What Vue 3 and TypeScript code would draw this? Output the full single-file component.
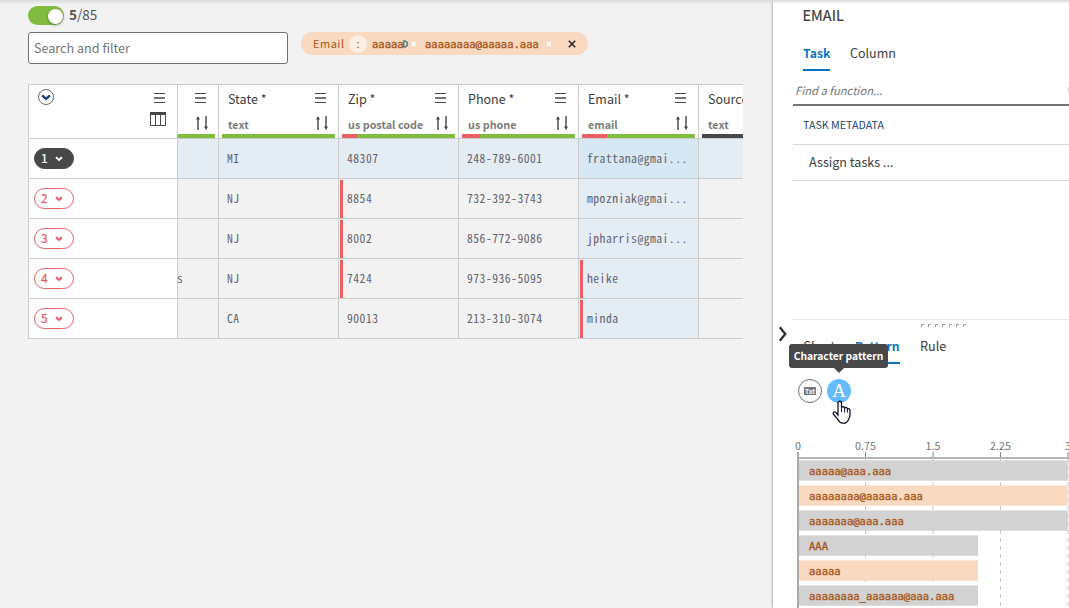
<script setup lang="ts">
interface Column {
  name: string
  type: string
  bad: number
  kind: 'normal' | 'clipped' | 'empty'
}
interface Cell {
  text: string
  invalid?: boolean
}

const columns: Column[] = [
  { name: '', type: '', bad: 0, kind: 'clipped' },
  { name: 'State *', type: 'text', bad: 0, kind: 'normal' },
  { name: 'Zip *', type: 'us postal code', bad: 15, kind: 'normal' },
  { name: 'Phone *', type: 'us phone', bad: 18, kind: 'normal' },
  { name: 'Email *', type: 'email', bad: 25, kind: 'normal' },
  { name: 'Source', type: 'text', bad: 0, kind: 'empty' },
]

const rows: Cell[][] = [
  [{ text: '' }, { text: 'MI' }, { text: '48307' }, { text: '248-789-6001' }, { text: 'frattana@gmai...' }, { text: '' }],
  [{ text: '' }, { text: 'NJ' }, { text: '8854', invalid: true }, { text: '732-392-3743' }, { text: 'mpozniak@gmai...' }, { text: '' }],
  [{ text: '' }, { text: 'NJ' }, { text: '8002', invalid: true }, { text: '856-772-9086' }, { text: 'jpharris@gmai...' }, { text: '' }],
  [{ text: 's' }, { text: 'NJ' }, { text: '7424', invalid: true }, { text: '973-936-5095' }, { text: 'heike', invalid: true }, { text: '' }],
  [{ text: '' }, { text: 'CA' }, { text: '90013' }, { text: '213-310-3074' }, { text: 'minda', invalid: true }, { text: '' }],
]

const ticks = [
  { label: '0', x: 8 },
  { label: '0.75', x: 75.5 },
  { label: '1.5', x: 143 },
  { label: '2.25', x: 210.5 },
  { label: '3', x: 278 },
]
const bars = [
  { label: 'aaaaa@aaa.aaa', value: 3, selected: false },
  { label: 'aaaaaaaa@aaaaa.aaa', value: 3, selected: true },
  { label: 'aaaaaaa@aaa.aaa', value: 3, selected: false },
  { label: 'AAA', value: 2, selected: false },
  { label: 'aaaaa', value: 2, selected: true },
  { label: 'aaaaaaaa_aaaaaa@aaa.aaa', value: 2, selected: false },
]
</script>

<template>
  <div class="app">
    <main class="main">
      <div class="counter">
        <span class="toggle"><span class="knob"></span></span>
        <span class="count"><b>5</b>/85</span>
      </div>
      <div class="filters">
        <div class="search">Search and filter</div>
        <div class="chip">
          <span class="chip-name">Email</span>
          <span class="chip-op">:</span>
          <span class="pattern-text chip-a">aaaaa</span>
          <svg class="chip-icons" width="18" height="10" viewBox="0 0 18 10">
            <path d="M1.700 2v6h1.600l2-1.700v-2.600l-2-1.700z" fill="none" stroke="#4f8589" stroke-width="1.600" />
            <path d="M9.500 2.800l4 4.400m0-4.400l-4 4.400" stroke="#fff" stroke-width="1.500" />
          </svg>
          <span class="pattern-text chip-b">aaaaaaaa@aaaaa.aaa</span>
          <svg class="chip-x" width="6" height="10" viewBox="0 0 6 10"><path d="M.8 2.800l4.200 4.400m0-4.400L.8 7.200" stroke="#fff" stroke-width="1.500" /></svg>
          <svg class="chip-close" width="8" height="8" viewBox="0 0 8 8"><path d="M.8.8l6.400 6.400m0-6.400L.8 7.200" stroke="#222" stroke-width="1.500" /></svg>
        </div>
      </div>

      <div class="grid">
        <div class="row head">
          <div class="cell corner">
            <svg width="17" height="17" viewBox="0 0 17 17" class="circle-down">
              <circle cx="8" cy="8" r="7.500" fill="#fff" stroke="#666" />
              <path d="M4.100 6.400l3.900 3.400 3.900-3.400" fill="none" stroke="#1b4670" stroke-width="2.400" />
            </svg>
            <div class="corner-icons">
              <svg class="corner-burger" width="11" height="11" viewBox="0 0 11 11"><path d="M0 .5h11M0 9.500h11" stroke="#484848" /><path d="M0 5h11" stroke="#777" stroke-width="2" /></svg>
              <svg width="16" height="14" viewBox="0 0 16 14"><path d="M.5 1v12.500h15V1M5.500 3v10.500M10.500 3v10.500" fill="none" stroke="#484848" /><path d="M0 0h16v3H0z" fill="#484848" /></svg>
            </div>
          </div>
          <div v-for="(c, i) in columns" :key="i" class="cell th" :class="c.kind">
            <div class="th-line top">
              <span class="name">{{ c.name }}</span>
              <svg v-if="c.kind !== 'empty'" class="burger" width="11" height="11" viewBox="0 0 11 11"><path d="M0 .5h11M0 9.500h11" stroke="#484848" /><path d="M0 5h11" stroke="#777" stroke-width="2" /></svg>
            </div>
            <div class="th-line">
              <span class="type">{{ c.type }}</span>
              <svg v-if="c.kind !== 'empty'" class="sort" width="13" height="14" viewBox="0 0 13 14">
                <path d="M2 2v12M10 0v12" stroke="#5c5c5c" stroke-width="1.600" />
                <path d="M0 3.500L2 0l2 3.500zM8 10.500l2 3.500 2-3.500z" fill="#444" />
              </svg>
            </div>
            <div class="quality"><span class="bad" :style="{ width: c.bad + 'px' }"></span></div>
          </div>
        </div>
        <div v-for="(r, ri) in rows" :key="ri" class="row" :class="{ active: ri === 0 }">
          <div class="cell index">
            <span class="pill"><span class="num">{{ ri + 1 }}</span>
              <svg width="8" height="6" viewBox="0 0 8 6"><path d="M1 1.200l3 2.800 3-2.800" fill="none" stroke="currentColor" stroke-width="1.900" /></svg>
            </span>
          </div>
          <div v-for="(c, ci) in r" :key="ci" class="cell td mono" :class="{ invalid: c.invalid, email: ci === 4, first: ci === 0 }">{{ c.text }}</div>
        </div>
      </div>
    </main>

    <aside class="panel">
      <h1>EMAIL</h1>
      <nav class="tabs"><span class="tab on">Task</span><span class="tab">Column</span></nav>
      <div class="find"><span>Find a function...</span>
        <svg width="1" height="6" viewBox="0 0 1 6"><path d="M.5 0v6" stroke="#d4d4d4" /></svg>
      </div>
      <div class="section">TASK METADATA</div>
      <div class="item">Assign tasks ...</div>
      <div class="lower">
        <svg class="grip" width="46" height="4" viewBox="0 0 46 4"><path v-for="n in 7" :key="n" :d="`M${(n - 1) * 7 + 0.5} 3V.5h2.500`" fill="none" stroke="#999" /></svg>
        <nav class="tabs low"><span class="tab chart">Chart</span><span class="tab on pattern">Pattern</span><span class="tab rule">Rule</span></nav>
        <div class="modes">
          <span class="mode"><span class="txt">Txt</span></span>
          <span class="mode on">A</span>
        </div>
        <svg class="chart-svg" width="279" height="170" viewBox="0 0 279 170">
          <g class="ticks">
            <text v-for="t in ticks" :key="t.label" :x="t.x" y="12" text-anchor="middle">{{ t.label }}</text>
          </g>
          <path v-for="t in ticks" :key="'g' + t.x" :d="`M${t.x} 20V170`" stroke="#c8c8c8" stroke-dasharray="4 4" />
          <path v-for="t in ticks" :key="'t' + t.x" :d="`M${t.x} 14V21`" stroke="#888" />
          <path d="M7.500 20H279" stroke="#b4b4b4" stroke-width="2" />
          <g v-for="(b, i) in bars" :key="b.label">
            <rect x="8.500" :y="22.400 + i * 25" :width="b.value * 90 - 0.5" height="20.300" :fill="b.selected ? '#f9d9bf' : '#d2d2d2'" />
            <text class="pattern-text bar-label" x="19" :y="37 + i * 25">{{ b.label }}</text>
          </g>
          <path d="M8 14V170" stroke="#aaa" stroke-width="2" />
        </svg>
      </div>
    </aside>

    <svg class="collapse" width="10" height="16" viewBox="0 0 10 16"><path d="M1.800 1.200L7.300 8l-5.500 6.800" fill="none" stroke="#2c2c2c" stroke-width="2.300" /></svg>
    <div class="tooltip">Character pattern</div>
    <svg class="cursor" width="19" height="25" viewBox="0 0 19 25">
      <path d="M6 15V3.200C6 .6 9.500.6 9.500 3.200V7.500C10 6.300 12.400 6.500 12.600 8.100 13.300 7 15.200 7.300 15.400 8.900 16.300 8.200 18 8.800 18 10.500V15C18 17.500 17 18.500 16.200 20.200 15 22.600 12.500 23.600 10.500 23.200 7.500 22.800 6.500 20.500 5.500 18.800L1.500 14.300C.5 12.600 2.600 11.200 3.900 12.500z" fill="#fff" stroke="#14142a" stroke-width="1.300" />
      <path d="M9.500 7v5M12.600 8v4.500M15.400 9v3.600" stroke="#14142a" />
    </svg>
    <div class="top-shade"></div>
  </div>
</template>

<style>
body { margin: 0; overflow: hidden; }
</style>

<style scoped>
.app { position: relative; display: flex; width: 1069px; height: 608px; overflow: hidden; background: #f2f2f2; color: #3d3d3d; font: 12.500px/20px "Noto Sans CJK SC", "Open Sans", sans-serif; }
.app * { box-sizing: border-box; }
.app svg { display: block; flex: none; }
.mono { font-family: "Noto Sans Mono CJK SC", "Liberation Mono", monospace; font-size: 11.600px; letter-spacing: .5px; white-space: pre; }
.pattern-text { font-family: "DejaVu Sans Mono", monospace; font-size: 10.500px; white-space: pre; }
.top-shade { position: absolute; left: 0; top: 0; width: 100%; height: 4px; background: linear-gradient(#d9d9d9, rgba(230, 230, 230, 0)); }

.main { width: 773px; padding: 5px 0 0 28px; }
.counter { display: flex; align-items: center; height: 20px; gap: 5px; }
.toggle { width: 36px; height: 19px; border-radius: 10px; background: #81bc41; padding: 2px 1px 0 20px; margin-top: 1px; }
.knob { display: block; width: 15px; height: 15px; border-radius: 50%; background: #fff; margin-top: 1px; box-shadow: 0 1px 3px rgba(0, 0, 0, .4); }
.count { font-size: 13.500px; color: #555; line-height: 20px; margin-top: -2px; }
.filters { display: flex; margin-top: 7px; height: 32px; gap: 13px; }
.search { width: 260px; height: 32px; border: 1px solid #6f6f6f; border-radius: 3px; background: #fff; padding: 0 5px; line-height: 29px; font-size: 12.600px; color: #757575; }
.chip { display: flex; align-items: center; height: 23px; width: 287px; border-radius: 12px; background: #f9d9bf; padding-left: 12px; color: #a9591e; line-height: 23px; }
.chip-name { width: 36px; font-size: 11px; letter-spacing: .5px; }
.chip-op { width: 18px; height: 18px; border-radius: 50%; background: #fceee3; line-height: 17px; text-align: center; font-size: 11px; }
.chip .pattern-text { -webkit-text-stroke: .4px #a9591e; line-height: 24px; }
.chip-a { margin-left: 5px; width: 30px; }
.chip-icons { margin-right: 5px; }
.chip-b { width: 116px; }
.chip-x { margin-left: 5px; }
.chip-close { margin-left: 16px; }

.grid { width: 715px; margin-top: 20px; overflow: hidden; border-top: 1px solid #ccc; border-left: 1px solid #ccc; }
.row { display: grid; grid-template-columns: 149px 41px repeat(4, 120px) 44px; height: 40px; }
.row.head { height: 54px; background: #fff; }
.cell { border-right: 1px solid #ccc; border-bottom: 1px solid #ccc; min-width: 0; overflow: hidden; }
.cell:last-child { border-right: 0; }
.corner { display: flex; justify-content: space-between; padding: 4px 11px 0 9px; }
.corner-icons { display: flex; flex-direction: column; align-items: flex-end; gap: 8px; padding-top: 4px; }
.corner-burger { margin-right: 1px; }
.th { display: flex; flex-direction: column; padding: 4px 0 0; }
.th-line { display: flex; flex: none; justify-content: space-between; height: 21px; padding: 0 9px; line-height: 20px; white-space: nowrap; }
.th-line.top { height: 24px; }
.burger { margin: 4px 3px 0 0; }
.sort { margin: 3px 0 0; }
.type { font-size: 10.800px; font-weight: 700; color: #7d7d7d; line-height: 22px; }
.quality { flex: none; height: 4px; margin: auto 3px 0; background: #81bc41; }
.clipped .quality { margin-left: 0; }
.empty .quality { background: #484848; margin-right: 0; }
.bad { display: block; height: 4px; background: #ea6065; }
.index { background: #fff; padding: 9px 0 0 5px; }
.pill { display: flex; align-items: center; width: 40px; height: 21px; border: 1px solid #ea6065; border-radius: 11px; padding-left: 6px; color: #e0585e; line-height: 18px; }
.num { width: 14px; height: 19px; font-size: 12px; -webkit-text-stroke: .2px currentColor; }
.active .pill { background: #484848; border-color: #484848; color: #fff; }
.td { position: relative; padding-left: 8px; line-height: 38px; color: #62626c; }
.td.first { padding-left: 0; text-indent: -1px; }
.active .td { background: #e4ecf4; }
.td.email { background: #e4ecf4; }
.active .td.email { background: #d5e8f4; }
.invalid::before { content: ""; position: absolute; left: 1px; top: 1px; bottom: 0; width: 3px; background: #ea6065; }

.panel { width: 296px; background: #fff; box-shadow: 0 0 3px rgba(0, 0, 0, .45); padding: 5px 0 0 20px; }
h1 { margin: 0; padding-left: 9.500px; font-size: 14.500px; font-weight: 400; line-height: 20px; height: 22px; -webkit-text-stroke: .2px currentColor; }
.tabs { display: flex; gap: 20px; padding: 16px 0 0 10px; height: 44px; }
.tab { height: 28px; line-height: 20px; }
.tab.on { width: 27px; color: #0675c1; font-weight: 700; font-size: 12.200px; border-bottom: 2px solid #0675c1; }
.find { display: flex; justify-content: space-between; align-items: center; height: 35px; border-bottom: 2px solid #757575; padding: 4px 0 0 2px; font-style: italic; font-size: 11.200px; color: #777; }
.section { height: 39px; border-bottom: 1px solid #d8d8d8; padding-left: 10px; line-height: 38px; font-size: 10.700px; color: #1b4670; }
.item { height: 36px; border-bottom: 1px solid #d8d8d8; padding-left: 16px; line-height: 33px; font-size: 12.600px; }
.lower { margin-top: 138px; border-top: 1px solid #e8e8e8; }
.grip { margin: 4px 0 0 128px; }
.tabs.low { padding-top: 8px; height: 49px; }
.low .chart { width: 32px; }
.low .pattern { width: 45px; }
.low .rule { font-size: 12.700px; }
.modes { display: flex; gap: 5px; padding: 2px 0 0 5px; }
.mode { display: flex; align-items: center; justify-content: center; width: 24px; height: 24px; border: 1px solid #707070; border-radius: 50%; }
.mode.on { border: 0; background: #66bbfc; color: #fff; font: 19px/24px "Liberation Serif", serif; }
.txt { width: 12px; height: 8px; background: #777; color: #fff; font-size: 6.500px; line-height: 8px; font-weight: 700; text-align: center; }
.chart-svg { margin: 35px 0 0 -3px; }
.ticks text { font-size: 10.800px; fill: #757575; }
.bar-label { fill: #a9591e; stroke: #a9591e; stroke-width: .4px; }

.collapse { position: absolute; left: 778px; top: 326px; }
.tooltip { position: absolute; left: 789px; top: 344px; width: 99px; height: 24px; border-radius: 3px; background: #484848; color: #fff; font-size: 10.300px; font-weight: 700; line-height: 23px; text-align: center; white-space: nowrap; }
.tooltip::after { content: ""; position: absolute; left: 45px; top: 24px; border: 5px solid transparent; border-top-color: #484848; border-bottom: 0; }
.cursor { position: absolute; left: 832px; top: 400px; }
</style>
